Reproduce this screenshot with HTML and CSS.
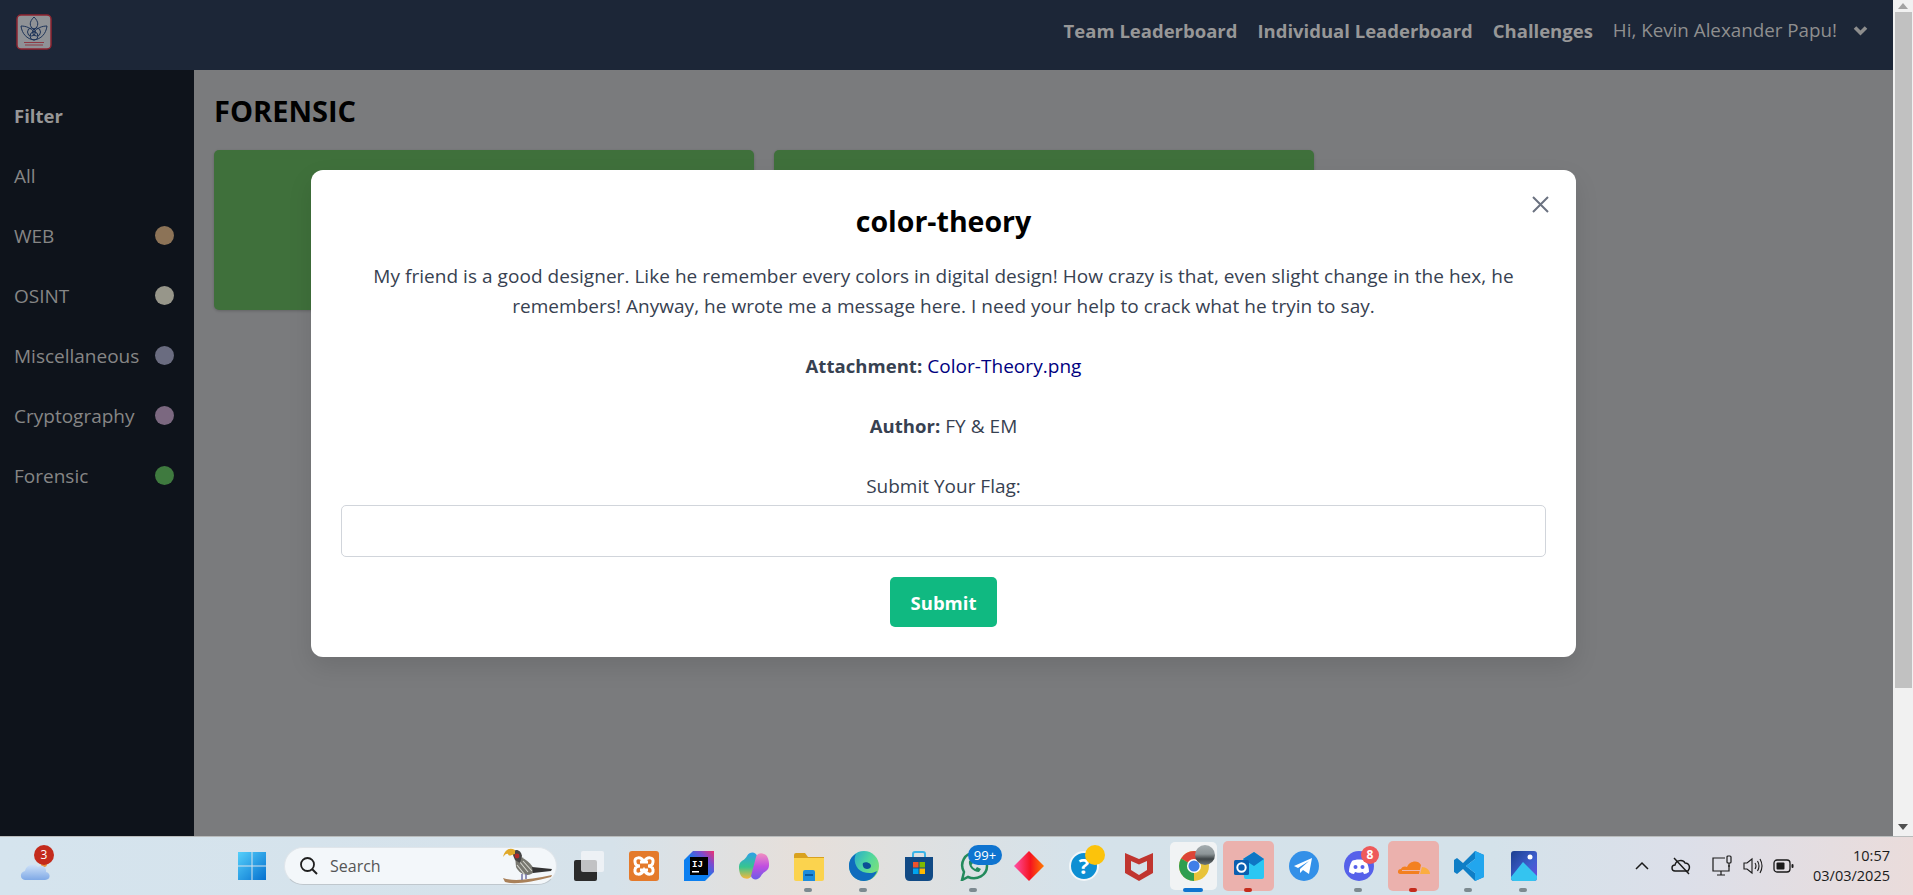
FILE: index.html
```html
<!DOCTYPE html>
<html lang="en">
<head>
    <meta charset="UTF-8">
    <meta name="viewport" content="width=device-width, initial-scale=1.0">
    <title>Challenges</title>
    <link rel="stylesheet" href="styles.css">
</head>
<body>
    <div class="browser">
        <div class="page">
            <header class="navbar">
                <svg class="logo" width="36" height="36" viewBox="0 0 36 36">
                    <rect x="1" y="1" width="34" height="34" rx="4" fill="#8f9296" stroke="#8e2430" stroke-width="1.5"/>
                    <g fill="none" stroke="#1d3358" stroke-width="1">
                        <path d="M18 3 C13 8 13 12 18 16 C23 12 23 8 18 3Z"/>
                        <path d="M5 12 C6 20 11 25 18 26 C25 25 30 20 31 12 C26 12 21 14 18 18 C15 14 10 12 5 12Z"/>
                        <circle cx="15.500" cy="18" r="4"/>
                        <circle cx="20.500" cy="18" r="4"/>
                        <circle cx="18" cy="22" r="4"/>
                    </g>
                    <path d="M8 28.500h20M9 31h18" stroke="#8e3a44" stroke-width="1"/>
                </svg>
                <nav class="nav-links">
                    <a href="#">Team Leaderboard</a>
                    <a href="#">Individual Leaderboard</a>
                    <a href="#">Challenges</a>
                    <span class="nav-user">Hi, Kevin Alexander Papu!</span>
                    <svg class="nav-caret" width="15" height="11" viewBox="0 0 15 11"><path d="M2 2.500 L7.500 8 L13 2.500" fill="none" stroke="#8d8d8d" stroke-width="3.600"/></svg>
                </nav>
            </header>

            <div class="layout">
                <aside class="sidebar">
                    <div class="filter-title">Filter</div>
                    <div class="filter-row">All</div>
                    <div class="filter-row">WEB <span class="dot dot-web"></span></div>
                    <div class="filter-row">OSINT <span class="dot dot-osint"></span></div>
                    <div class="filter-row">Miscellaneous <span class="dot dot-misc"></span></div>
                    <div class="filter-row">Cryptography <span class="dot dot-crypto"></span></div>
                    <div class="filter-row">Forensic <span class="dot dot-forensic"></span></div>
                </aside>
                <main class="content">
                    <h1>FORENSIC</h1>
                    <div class="cards">
                        <div class="card"></div>
                        <div class="card"></div>
                    </div>
                </main>
            </div>

            <!-- challenge popup -->
            <div class="overlay">
                <div class="modal">
                    <svg class="modal-close" width="24" height="24" viewBox="0 0 24 24"><path d="M5 4 L20 19 M20 4 L5 19" stroke="#6b7280" stroke-width="2" fill="none"/></svg>
                    <h2>color-theory</h2>
                    <p>My friend is a good designer. Like he remember every colors in digital design! How crazy is that, even slight change in the hex, he remembers! Anyway, he wrote me a message here. I need your help to crack what he tryin to say.</p>
                    <p><b>Attachment:</b> <a href="#">Color-Theory.png</a></p>
                    <p><b>Author:</b> FY &amp; EM</p>
                    <form class="flag-form">
                        <label for="flag">Submit Your Flag:</label>
                        <input id="flag" type="text">
                        <button type="button">Submit</button>
                    </form>
                </div>
            </div>
        </div>

        <div class="scrollbar">
            <svg class="arrow-up" width="10" height="6" viewBox="0 0 10 6"><path d="M5 0 L10 6 H0Z" fill="#a3a3a3"/></svg>
            <div class="thumb"></div>
            <svg class="arrow-down" width="10" height="6" viewBox="0 0 10 6"><path d="M0 0 H10 L5 6Z" fill="#505050"/></svg>
        </div>
    </div>

    <footer class="taskbar">
        <div class="weather">
            <svg width="30" height="22" viewBox="0 0 30 22">
                <defs><linearGradient id="cloudFill" x1="0" y1="0" x2="0" y2="1"><stop offset="0" stop-color="#cfe2f8"/><stop offset="1" stop-color="#7fa9e6"/></linearGradient></defs>
                <circle cx="24" cy="5" r="3" fill="#e8923a"/>
                <path d="M5 21 C0 21 -1 13 5 12 C6 6 14 3 18 8 C21 5 27 8 26 13 C31 14 31 21 25 21Z" fill="url(#cloudFill)"/>
            </svg>
            <span class="weather-badge">3</span>
        </div>

        <div class="task-slot start">
            <svg width="30" height="30" viewBox="0 0 30 30">
                <defs><linearGradient id="winFill" x1="0" y1="0" x2="1" y2="1"><stop offset="0" stop-color="#55d0fb"/><stop offset="1" stop-color="#0570cf"/></linearGradient></defs>
                <path d="M1 1h13.500v13.500H1zM15.500 1H29v13.500H15.500zM1 15.500h13.500V29H1zM15.500 15.500H29V29H15.500z" fill="url(#winFill)"/>
            </svg>
        </div>

        <div class="searchbox">
            <svg width="20" height="20" viewBox="0 0 20 20"><circle cx="8.500" cy="8.500" r="6.500" fill="none" stroke="#1f1f1f" stroke-width="1.800"/><path d="M13 13 L18 18" stroke="#1f1f1f" stroke-width="2"/></svg>
            <span>Search</span>
            <svg class="bird" width="50" height="38" viewBox="0 0 50 38">
                <path d="M1 31 C12 35 30 32 50 28 L49 30 C30 35 12 38 3 35Z" fill="#a9815a"/>
                <path d="M13 9 C22 9 30 17 33 24 C27 31 18 28 14 20Z" fill="#77776f"/>
                <path d="M17 14 L26 25 M21 14 L30 24 M15 18 L23 28" stroke="#d6d6cf" stroke-width="1.100"/>
                <path d="M30 20 L50 22 L49 24 L40 25 L31 26Z" fill="#333"/>
                <path d="M10 5 C14 1 19 3 20 9 L18 16 L13 13 C12 11 11 8 10 5Z" fill="#454545"/>
                <circle cx="15" cy="9" r="2.400" fill="#b32a2a"/>
                <path d="M13 3 C8 0 3 2 1 10 C3 7 5 6 6 7 C7 10 9 8 13 7Z" fill="#e0a92a"/>
                <path d="M20 27v6M24 27v5" stroke="#7a78a8" stroke-width="1.600"/>
            </svg>
        </div>

        <div class="task-apps">
            <div class="task-slot">
                <svg width="30" height="30" viewBox="0 0 30 30">
                    <rect x="0" y="9" width="23" height="21" rx="2" fill="#2b2b2b"/>
                    <rect x="7" y="0" width="23" height="21" rx="2" fill="#f4f6f8" fill-opacity=".75"/>
                </svg>
            </div>
            <div class="task-slot">
                <svg width="30" height="30" viewBox="0 0 30 30">
                    <rect width="30" height="30" rx="3" fill="#e47a2b"/>
                    <path d="M11 11 H19 M11 19 H19 M15 11 C12 5 5 6 6 11 C6 14 9 15 11 15 C9 15 6 16 6 19 C5 24 12 25 15 19 C18 25 25 24 24 19 C24 16 21 15 19 15 C21 15 24 14 24 11 C25 6 18 5 15 11" fill="none" stroke="#fff" stroke-width="3"/>
                </svg>
            </div>
            <div class="task-slot">
                <svg width="30" height="30" viewBox="0 0 30 30">
                    <defs><linearGradient id="ijFill" x1="0" y1="1" x2="1" y2="0"><stop offset=".45" stop-color="#0b7ff0"/><stop offset=".75" stop-color="#7a4bd0"/><stop offset="1" stop-color="#f0316f"/></linearGradient></defs>
                    <path d="M9 0 H30 V21 L21 30 H0 V9Z" fill="url(#ijFill)"/>
                    <rect x="6" y="6" width="18" height="18" fill="#000"/>
                    <text x="8" y="15.500" class="ij-text">IJ</text>
                    <rect x="8" y="20" width="7" height="1.500" fill="#fff"/>
                </svg>
            </div>
            <div class="task-slot">
                <svg width="30" height="30" viewBox="0 0 30 30">
                    <defs>
                        <linearGradient id="copA" x1="0" y1="0" x2="0" y2="1"><stop offset="0" stop-color="#2f9fe8"/><stop offset=".55" stop-color="#37c58f"/><stop offset="1" stop-color="#f5b83d"/></linearGradient>
                        <linearGradient id="copB" x1="0" y1="0" x2="0" y2="1"><stop offset="0" stop-color="#f08fc0"/><stop offset=".5" stop-color="#c04ee0"/><stop offset="1" stop-color="#6a5ce8"/></linearGradient>
                    </defs>
                    <path d="M8 5 C11 0 17 1 18 5 L13 24 C11 29 6 28 3 26 C0 23 -1 15 1 12 C3 9 6 9 8 5Z" fill="url(#copA)"/>
                    <path d="M22 25 C19 30 13 29 12 25 L17 6 C19 1 24 2 27 4 C30 7 31 15 29 18 C27 21 24 21 22 25Z" fill="url(#copB)"/>
                </svg>
            </div>
            <div class="task-slot running">
                <svg width="30" height="30" viewBox="0 0 30 30">
                    <path d="M0 4 Q0 2 2 2 H11 L14 6 H30 V12 H0Z" fill="#d9a11e"/>
                    <path d="M0 7 H30 V28 Q30 30 28 30 H2 Q0 30 0 28Z" fill="#fbd34e"/>
                    <path d="M9 21 Q9 19 11 19 H19 Q21 19 21 21 V30 H9Z" fill="#1f8ddb"/>
                    <rect x="11" y="23" width="8" height="2" fill="#0a5a9f"/>
                </svg>
            </div>
            <div class="task-slot running">
                <svg width="30" height="30" viewBox="0 0 30 30">
                    <defs><linearGradient id="edgeFill" x1="0" y1="0" x2="1" y2=".6"><stop offset="0" stop-color="#1f9fd8"/><stop offset=".6" stop-color="#4fd6a0"/><stop offset="1" stop-color="#7be07a"/></linearGradient></defs>
                    <circle cx="15" cy="15" r="15" fill="url(#edgeFill)"/>
                    <path d="M15 30 C6 30 0 23 0 15 C0 9 3 5 7 3 C4 8 6 18 14 21 C20 23 25 22 28 20 C26 26 21 30 15 30Z" fill="#0f6cbd"/>
                    <path d="M14 12 C17 10 22 12 22 15 C22 17 20 18 18 18 C15 18 13 15 14 12Z" fill="#0b4f96"/>
                </svg>
            </div>
            <div class="task-slot">
                <svg width="30" height="30" viewBox="0 0 30 30">
                    <path d="M9 6 V3 Q9 1 11 1 H19 Q21 1 21 3 V6" fill="none" stroke="#3ab4e8" stroke-width="2"/>
                    <path d="M1 6 H29 V25 Q29 30 24 30 H6 Q1 30 1 25Z" fill="#114a85"/>
                    <rect x="9" y="11" width="5.500" height="5.500" fill="#f0522b"/>
                    <rect x="15.500" y="11" width="5.500" height="5.500" fill="#7fba00"/>
                    <rect x="9" y="17.500" width="5.500" height="5.500" fill="#00a4ef"/>
                    <rect x="15.500" y="17.500" width="5.500" height="5.500" fill="#ffb900"/>
                </svg>
            </div>
            <div class="task-slot running">
                <svg width="30" height="30" viewBox="0 0 30 30">
                    <path d="M3 29 L5 21 C0 12 6 2 15 2 C23 2 28 8 28 15 C28 24 18 30 9 26Z" fill="none" stroke="#238a5c" stroke-width="2.500"/>
                    <path d="M10 10 C9 15 14 21 20 21 L22 18 L18 16 L16.500 18 C14.500 17 13 15.500 12.500 14 L14 12 L12.500 8Z" fill="#238a5c"/>
                </svg>
                <span class="count-badge">99+</span>
            </div>
            <div class="task-slot">
                <svg width="30" height="30" viewBox="0 0 30 30">
                    <defs><linearGradient id="diamondFill" x1="0" y1="0" x2="1" y2="0"><stop offset="0" stop-color="#ff4fa8"/><stop offset=".55" stop-color="#f5141f"/><stop offset="1" stop-color="#ff7a00"/></linearGradient></defs>
                    <path d="M15 0 L30 15 L15 30 L0 15Z" fill="url(#diamondFill)"/>
                </svg>
            </div>
            <div class="task-slot">
                <svg width="30" height="30" viewBox="0 0 30 30">
                    <circle cx="15" cy="15" r="14" fill="#0d8fd3" stroke="#f2f6f8" stroke-width="2"/>
                    <text x="15" y="23" class="help-text">?</text>
                </svg>
                <span class="help-dot"></span>
            </div>
            <div class="task-slot">
                <svg width="28" height="30" viewBox="0 0 28 30">
                    <path d="M0 2 L14 8 L28 2 V22 L14 30 L0 22Z M6 10 V19 L14 24 L22 19 V10 L14 13.500Z" fill="#c0352f" fill-rule="evenodd"/>
                </svg>
            </div>
            <div class="task-slot active-light running-blue">
                <svg width="30" height="30" viewBox="0 0 34 34">
                    <circle cx="17" cy="17" r="17" fill="#e8c33a"/>
                    <path d="M17 17 L2.300 8.500 A17 17 0 0 1 31.700 8.500Z" fill="#dc4437"/>
                    <path d="M17 17 L2.300 8.500 A17 17 0 0 0 17 34Z" fill="#2f9e50"/>
                    <circle cx="17" cy="17" r="8" fill="#fff"/>
                    <circle cx="17" cy="17" r="6.300" fill="#3f7fe8"/>
                </svg>
                <span class="profile-ball"></span>
            </div>
            <div class="task-slot active-red">
                <svg width="30" height="30" viewBox="0 0 30 30">
                    <path d="M9 8 L20 1 L30 8 V26 Q30 28 28 28 H12 Q10 28 10 26Z" fill="#2bc7f3"/>
                    <path d="M9 8 L20 1 L30 8 L20 15Z" fill="#0f76c4"/>
                    <rect x="0" y="9" width="15" height="15" rx="1.500" fill="#0a5fb0"/>
                    <circle cx="7.500" cy="16.500" r="4.200" fill="none" stroke="#fff" stroke-width="2"/>
                </svg>
            </div>
            <div class="task-slot">
                <svg width="30" height="30" viewBox="0 0 30 30">
                    <circle cx="15" cy="15" r="15" fill="#3390e8"/>
                    <path d="M5 15 L23 7 L20 23 L14 19 L11 22 L11 18 L20 10 L9 17Z" fill="#fff"/>
                </svg>
            </div>
            <div class="task-slot running">
                <svg width="30" height="30" viewBox="0 0 30 30">
                    <circle cx="15" cy="15" r="15" fill="#5661ea"/>
                    <path d="M8 10 C11 8 19 8 22 10 C24 13 25 17 25 21 C23 22 22 23 20 23 L19 21 C17 22 13 22 11 21 L10 23 C8 23 7 22 5 21 C5 17 6 13 8 10Z" fill="#fff"/>
                    <circle cx="11.500" cy="16" r="2" fill="#5661ea"/>
                    <circle cx="18.500" cy="16" r="2" fill="#5661ea"/>
                </svg>
                <span class="discord-badge">8</span>
            </div>
            <div class="task-slot active-red">
                <svg width="32" height="15" viewBox="0 0 32 15">
                    <path d="M2 15 C-1 15 -1 10 3 10 C4 7 8 7 9 8 C11 2 20 0 23 6 L21 15Z" fill="#f38020"/>
                    <path d="M22 15 L24 8 C28 8 32 11 32 15Z" fill="#fbad41"/>
                    <path d="M4 11.500 H22" stroke="#edb7ae" stroke-width="1"/>
                </svg>
            </div>
            <div class="task-slot running">
                <svg width="30" height="30" viewBox="0 0 30 30">
                    <path d="M21 0 L30 4 V26 L21 30 L9 18 L3 23 L0 21 V9 L3 7 L9 12Z M21 8 L12 15 L21 22Z" fill="#0f7ec6" fill-rule="evenodd"/>
                    <path d="M21 0 L30 4 V26 L21 30Z M21 8 V22 L12 15Z" fill="#22a6ee" fill-rule="evenodd"/>
                </svg>
            </div>
            <div class="task-slot running">
                <svg width="26" height="30" viewBox="0 0 26 30">
                    <defs><linearGradient id="photoFill" x1="0" y1="0" x2="1" y2="1"><stop offset="0" stop-color="#1c3f8f"/><stop offset=".6" stop-color="#3f5fd0"/><stop offset="1" stop-color="#6a4be0"/></linearGradient></defs>
                    <rect width="26" height="30" rx="3" fill="url(#photoFill)"/>
                    <circle cx="19" cy="6" r="2.500" fill="#fff"/>
                    <path d="M0 26 L12 11 L26 25 V27 Q26 30 23 30 H3 Q0 30 0 27Z" fill="#34c4f0"/>
                </svg>
            </div>
        </div>

        <div class="tray">
            <svg width="16" height="10" viewBox="0 0 16 10"><path d="M2 8 L8 2 L14 8" fill="none" stroke="#1a1a1a" stroke-width="1.500"/></svg>
            <svg width="22" height="20" viewBox="0 0 22 20"><path d="M5 15 C1 15 1 9 5 9 C6 4 13 3 15 7 C19 7 21 11 18 15Z" fill="none" stroke="#1a1a1a" stroke-width="1.400"/><path d="M4 2 L19 18" stroke="#1a1a1a" stroke-width="1.400"/></svg>
            <svg class="tray-net" width="22" height="22" viewBox="0 0 22 22"><path d="M13 3 H1 V16 H17 V10 M9 16 V20 M5 20 H13" fill="none" stroke="#1a1a1a" stroke-width="1.200"/><rect x="15" y="1" width="4" height="7" rx="1" fill="none" stroke="#1a1a1a" stroke-width="1.200"/><path d="M17 8 V12" stroke="#1a1a1a" stroke-width="1.200"/></svg>
            <svg class="tray-vol" width="20" height="18" viewBox="0 0 20 18"><path d="M1 6 H4 L9 2 V16 L4 12 H1Z" fill="none" stroke="#1a1a1a" stroke-width="1.100"/><path d="M12 6 Q14 9 12 12 M14.500 4 Q17.500 9 14.500 14 M17 2 Q21 9 17 16" fill="none" stroke="#1a1a1a" stroke-width="1.100"/></svg>
            <svg class="tray-bat" width="21" height="14" viewBox="0 0 21 14"><rect x="1" y="1" width="16" height="12" rx="3" fill="none" stroke="#1a1a1a" stroke-width="1.300"/><rect x="3.500" y="3.500" width="8" height="7" rx="1" fill="#1a1a1a"/><rect x="18.500" y="5" width="2" height="4" rx="1" fill="#1a1a1a"/></svg>
            <div class="clock">
                <div>10:57</div>
                <div>03/03/2025</div>
            </div>
        </div>
    </footer>
</body>
</html>
```

FILE: styles.css
```css
* {
    box-sizing: border-box;
}

html, body {
    margin: 0;
    height: 100%;
    overflow: hidden;
}

body {
    font-family: 'Open Sans', 'Noto Sans', sans-serif;
    font-size: 19px;
    display: flex;
    flex-direction: column;
}

.browser {
    display: flex;
    height: 836px;
}

.page {
    position: relative;
    flex: 1;
    display: flex;
    flex-direction: column;
    background-color: #7a7b7d;
}

/* navbar */
.navbar {
    height: 70px;
    padding: 0 25px 10px 16px;
    display: flex;
    align-items: center;
    justify-content: space-between;
    background-color: #1c2637;
}

.logo {
    margin-bottom: -3px;
}

.nav-links {
    display: flex;
    align-items: center;
    gap: 20px;
    color: #8f8f8f;
}

.nav-links a {
    color: #979797;
    font-size: 18.500px;
    font-weight: 700;
    text-decoration: none;
}

.nav-user {
    color: #8f8f8f;
    font-size: 18.800px;
}

.nav-caret {
    margin-left: -4px;
}

/* sidebar */
.layout {
    flex: 1;
    display: flex;
}

.sidebar {
    width: 194px;
    padding: 31px 20px 0 14px;
    background-color: #0e131b;
    color: #868686;
}

.filter-title {
    height: 30px;
    line-height: 30px;
    font-size: 18.500px;
    font-weight: 700;
    color: #979797;
    margin-bottom: 30px;
}

.filter-row {
    height: 30px;
    line-height: 30px;
    margin-bottom: 30px;
    display: flex;
    align-items: center;
    justify-content: space-between;
}

.dot {
    width: 19px;
    height: 19px;
    margin-top: -1px;
    border-radius: 50%;
}

.dot-web { background-color: #8c7357; }
.dot-osint { background-color: #97968a; }
.dot-misc { background-color: #6a6c80; }
.dot-crypto { background-color: #7b6880; }
.dot-forensic { background-color: #3f7a3f; }

/* main content */
.content {
    flex: 1;
    padding: 21px 20px 20px;
}

.content h1 {
    margin: 0 0 19px;
    font-size: 29px;
    line-height: 40px;
    font-weight: 700;
    color: #000;
}

.cards {
    display: flex;
    gap: 20px;
}

.card {
    width: 540px;
    height: 160px;
    border-radius: 5px;
    background-color: #3f703b;
    box-shadow: 0 1px 3px rgba(0, 0, 0, 0.2);
}

/* popup */
.overlay {
    position: absolute;
    inset: 0;
    display: flex;
    justify-content: center;
    align-items: flex-start;
    padding: 170px 6px 0 0;
}

.modal {
    position: relative;
    width: 1265px;
    height: 487px;
    padding: 30px;
    background-color: #fff;
    border-radius: 12px;
    box-shadow: 0 10px 25px rgba(0, 0, 0, 0.1);
    text-align: center;
    color: #374151;
}

.modal-close {
    position: absolute;
    top: 23px;
    right: 24px;
}

.modal h2 {
    margin: 0 0 19px;
    font-size: 28.500px;
    line-height: 42px;
    font-weight: 700;
    color: #000;
}

.modal p {
    margin: 0 0 30px;
    line-height: 30px;
    letter-spacing: .04px;
}

.modal b {
    font-size: 18.500px;
}

.modal a {
    color: #000080;
    text-decoration: none;
}

.flag-form label {
    display: block;
    line-height: 30px;
    margin-bottom: 4px;
}

.flag-form input {
    display: block;
    width: 100%;
    height: 52px;
    margin-bottom: 20px;
    border: 1px solid #d1d5db;
    border-radius: 5px;
    background-color: #fff;
}

.flag-form button {
    width: 107px;
    height: 50px;
    border: none;
    border-radius: 5px;
    background-color: #10b981;
    color: #fff;
    font-family: inherit;
    font-size: 18.500px;
    font-weight: 700;
}

/* scrollbar */
.scrollbar {
    position: relative;
    width: 20px;
    background-color: #f1f1f1;
    padding: 12px 1px 0 2px;
}

.thumb {
    height: 676px;
    background-color: #c1c1c1;
}

.arrow-up {
    position: absolute;
    top: 3px;
    left: 5px;
}

.arrow-down {
    position: absolute;
    bottom: 6px;
    left: 5px;
}

/* taskbar */
.taskbar {
    height: 59px;
    display: flex;
    align-items: center;
    padding-left: 20px;
    border-top: 1px solid #b9bcbc;
    background: linear-gradient(90deg, #d5e4ee 0%, #d6e2ea 32%, #e6dfda 42%, #d5e2ea 56%, #d4e2ea 78%, #dcdfe9 88%, #eadcdb 100%);
    font-size: 14px;
    color: #1a1a1a;
}

.weather {
    position: relative;
    width: 30px;
    height: 22px;
    margin-top: 8px;
    margin-right: 174px;
}

.weather-badge {
    position: absolute;
    top: -14px;
    left: 14px;
    width: 20px;
    height: 20px;
    border-radius: 50%;
    background-color: #c42b1c;
    color: #fff;
    font-size: 12px;
    line-height: 20px;
    text-align: center;
}

.task-apps {
    display: flex;
    margin-left: 4px;
}

.task-slot {
    position: relative;
    width: 55px;
    height: 50px;
    display: flex;
    align-items: center;
    justify-content: center;
}

.task-slot svg {
    position: relative;
}

.task-slot.start {
    margin-right: 5px;
}

.searchbox {
    width: 273px;
    height: 38px;
    padding-left: 14px;
    display: flex;
    align-items: center;
    gap: 11px;
    background-color: #f3f7fa;
    border: 1px solid #dfe5ea;
    border-bottom-color: #bfc7cd;
    border-radius: 19px;
    color: #555;
    font-size: 16px;
}

.bird {
    margin-left: auto;
    margin-right: 4px;
}

.ij-text {
    font-family: 'Liberation Mono', monospace;
    font-size: 9px;
    font-weight: 700;
    fill: #fff;
}

.help-text {
    font-family: 'Open Sans', sans-serif;
    font-size: 22px;
    font-weight: 700;
    fill: #fff;
    text-anchor: middle;
}

.running::after,
.running-blue::after,
.active-red::after {
    content: "";
    position: absolute;
    bottom: -1px;
    left: 23px;
    width: 8px;
    height: 4px;
    border-radius: 2px;
    background-color: #7d8a90;
}

.running-blue::after {
    left: 17px;
    width: 20px;
    background-color: #0f74d0;
}

.active-red::after {
    background-color: #c42b1c;
}

.active-light::before,
.active-red::before {
    content: "";
    position: absolute;
    inset: 0 2px;
    border-radius: 5px;
    background-color: #f1f3f4;
}

.active-light::before {
    inset: 1px 4px;
}

.active-red::before {
    background-color: #ebb1ad;
}

.count-badge {
    position: absolute;
    top: 4px;
    left: 22px;
    width: 34px;
    height: 20px;
    border-radius: 10px;
    background-color: #0f74d0;
    color: #fff;
    font-size: 13px;
    line-height: 20px;
    text-align: center;
}

.help-dot {
    position: absolute;
    top: 4px;
    left: 29px;
    width: 20px;
    height: 20px;
    border-radius: 50%;
    background-color: #fcc30b;
}

.profile-ball {
    position: absolute;
    top: 4px;
    left: 29px;
    width: 20px;
    height: 20px;
    border-radius: 50%;
    background: linear-gradient(#a5adb0 0%, #8d9597 45%, #3e4446 70%, #70787a 100%);
}

.discord-badge {
    position: absolute;
    top: 5px;
    left: 30px;
    width: 18px;
    height: 18px;
    border-radius: 50%;
    background-color: #ee5a5a;
    color: #fff;
    font-size: 12px;
    font-weight: 700;
    line-height: 18px;
    text-align: center;
}

.tray {
    margin-left: auto;
    padding-right: 23px;
    display: flex;
    align-items: center;
}

.tray-net {
    margin-left: 20px;
}

.tray-vol {
    margin-left: 9px;
}

.tray-bat {
    margin-left: 10px;
}

.tray svg:first-child {
    margin-right: 20px;
}

.clock {
    margin-left: 19px;
    text-align: right;
    font-size: 14.500px;
    line-height: 20px;
}
```
